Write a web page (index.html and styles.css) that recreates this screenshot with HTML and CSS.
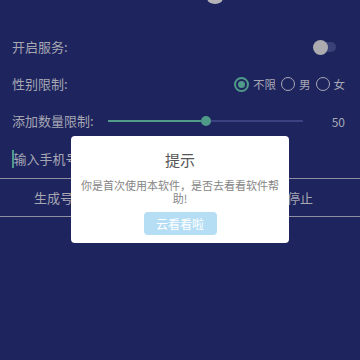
FILE: index.html
```html
<!DOCTYPE html>
<html>
<head>
<meta charset="utf-8">
<link rel="stylesheet" href="styles.css">
</head>
<body>
<div class="screen">
  <div class="top"><div class="blob"></div></div>
  <div class="row row-switch">
    <span class="label">开启服务:</span>
    <div class="switch"><div class="track"></div><div class="thumb"></div></div>
  </div>
  <div class="row row-radio">
    <span class="label">性别限制:</span>
    <div class="radios">
      <span class="radio checked"></span><span class="rlabel">不限</span>
      <span class="radio"></span><span class="rlabel">男</span>
      <span class="radio"></span><span class="rlabel">女</span>
    </div>
  </div>
  <div class="row row-slider">
    <span class="label">添加数量限制:</span>
    <div class="slider"><div class="active"></div><div class="knob"></div><div class="rest"></div></div>
    <span class="value">50</span>
  </div>
  <div class="input"><span class="cursor"></span><span class="placeholder">输入手机号码</span></div>
  <div class="buttons">
    <span class="btn">生成号码</span>
    <span class="btn"></span>
    <span class="btn">停止</span>
  </div>
</div>
<div class="dialog">
  <div class="title">提示</div>
  <div class="msg">你是首次使用本软件，是否去看看软件帮助!</div>
  <div class="ok">云看看啦</div>
</div>
</body>
</html>
```
FILE: styles.css
```css
html, body {
  margin: 0;
  padding: 0;
  width: 360px;
  height: 360px;
  overflow: hidden;
  background: #1e245e;
  font-family: "Noto Sans CJK SC", "Noto Sans", sans-serif;
  color: #a6a7b3;
}
.screen {
  display: flex;
  flex-direction: column;
}
.top {
  height: 28.5px;
  display: flex;
  padding-left: 207px;
  overflow: hidden;
}
.blob {
  width: 16px;
  height: 12px;
  margin-top: -8px;
  border-radius: 50%;
  background: #b4b4b8;
}
.row {
  height: 37px;
  display: flex;
  align-items: center;
  padding: 0 15px 0 12px;
}
.label {
  font-size: 13px;
  line-height: 16px;
  flex: 1 0 auto;
}
.row-switch { padding-right: 24px; }
.switch {
  position: relative;
  width: 23px;
  height: 15px;
  display: flex;
  align-items: center;
}
.track {
  margin-left: 2px;
  width: 21px;
  height: 10px;
  border-radius: 5px;
  background: #3a4078;
}
.thumb {
  position: absolute;
  left: 0;
  top: 0;
  width: 15px;
  height: 15px;
  border-radius: 50%;
  background: #ababb0;
}
.radios {
  display: flex;
  align-items: center;
}
.radio {
  width: 12px;
  height: 12px;
  border: 1.5px solid #a9a9b2;
  border-radius: 50%;
  margin-left: 5px;
  display: flex;
  align-items: center;
  justify-content: center;
}
.radio:first-child { margin-left: 0; }
.radio.checked { border: 2px solid #4f9a89; width: 11px; height: 11px; }
.radio.checked::after {
  content: "";
  width: 7px;
  height: 7px;
  border-radius: 50%;
  background: #4f9a89;
}
.rlabel {
  font-size: 11.5px;
  margin-left: 4px;
}
.row-slider .label { flex: 0 0 auto; width: 96px; }
.slider {
  width: 195px;
  height: 10px;
  display: flex;
  align-items: center;
}
.active { width: 93px; height: 2px; background: #4f9a89; }
.knob { width: 10px; height: 10px; border-radius: 50%; background: #4f9a89; }
.rest { flex: 1; height: 1.5px; background: #3b4283; }
.value {
  margin-left: auto;
  font-size: 12px;
}
.input {
  height: 38px;
  display: flex;
  align-items: center;
  padding-left: 12px;
  border-bottom: 1px solid #8e8fa0;
}
.cursor {
  width: 1.5px;
  height: 18px;
  background: #4f9a89;
}
.placeholder {
  font-size: 13px;
  white-space: nowrap;
}
.buttons {
  height: 37px;
  display: flex;
  align-items: center;
  border-bottom: 1px solid #8e8fa0;
}
.btn {
  flex: 1;
  text-align: center;
  font-size: 13px;
}
.dialog {
  position: absolute;
  left: 71px;
  top: 136px;
  width: 218px;
  height: 107px;
  box-sizing: border-box;
  background: #ffffff;
  border-radius: 4px;
  padding: 14px 9px 0;
  display: flex;
  flex-direction: column;
  align-items: center;
}
.title {
  font-size: 15px;
  line-height: 20px;
  color: #555555;
}
.msg {
  margin-top: 9px;
  font-size: 11px;
  line-height: 13px;
  color: #858585;
  text-align: center;
  width: 200px;
}
.ok {
  margin-top: 7px;
  width: 73px;
  height: 23px;
  border-radius: 4px;
  background: #b5def4;
  color: #ffffff;
  font-size: 12px;
  line-height: 23px;
  text-align: center;
}
```
